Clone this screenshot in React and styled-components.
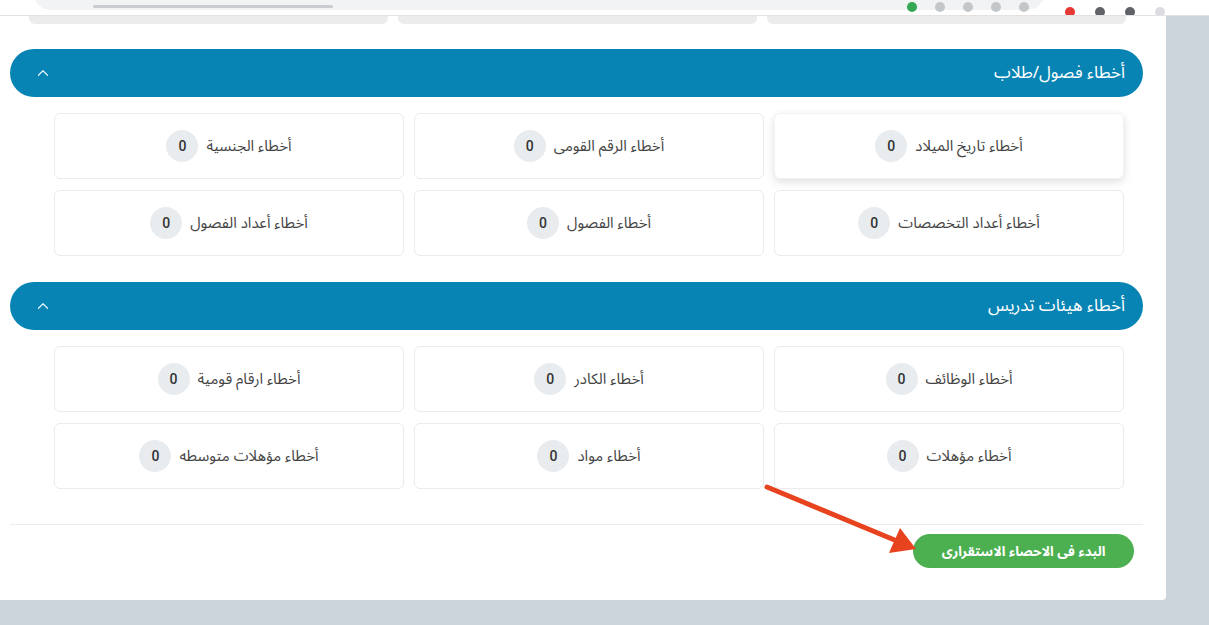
import React from "react";
import styled, { createGlobalStyle } from "styled-components";
import { ChevronUp } from "lucide-react";

const GlobalStyle = createGlobalStyle`
  html, body {
    margin: 0;
    padding: 0;
    background: #cdd5dc;
  }
  body {
    font-family: "Noto Sans Arabic", "DejaVu Sans", sans-serif;
  }
`;

const Page = styled.div`
  position: relative;
  width: 1209px;
  height: 625px;
  overflow: hidden;
  background: #cdd5dc;
`;

const BrowserBar = styled.div`
  height: 15px;
  background: #ffffff;
  border-bottom: 1px solid #e3e3e3;
  overflow: hidden;
  display: flex;
  align-items: flex-end;
  padding-left: 33px;
  gap: 20px;
`;

const Omnibox = styled.div`
  width: 1012px;
  height: 36px;
  margin-bottom: 5px;
  border-radius: 18px;
  background: #f1f3f4;
  display: flex;
  align-items: flex-end;
  padding: 0 16px 0 60px;
  box-sizing: border-box;
  gap: 18px;
`;

const UrlGhost = styled.span`
  width: 240px;
  height: 3px;
  margin-bottom: 2px;
  margin-right: auto;
  border-radius: 2px;
  background: #c9ccd0;
`;

const Dot = styled.span`
  width: 10px;
  height: 10px;
  border-radius: 50%;
  background: ${(p) => p.color};
  margin-bottom: -2px;
`;

const Main = styled.div`
  display: flex;
`;

const Panel = styled.div`
  width: 1166px;
  background: #ffffff;
  padding: 0 23px 32px 10px;
  box-sizing: border-box;
  border-bottom-right-radius: 4px;
`;

const TopStrip = styled.div`
  display: grid;
  grid-template-columns: repeat(3, 1fr);
  gap: 10px;
  margin: 0 17px 0 19px;
  height: 8px;
`;

const StripCard = styled.div`
  background: #ececec;
  border-radius: 0 0 6px 6px;
`;

const Section = styled.section`
  direction: rtl;
`;

const SectionHeader = styled.div`
  display: flex;
  align-items: center;
  justify-content: space-between;
  height: 48px;
  margin-top: ${(p) => p.top}px;
  padding: 0 18px 0 24px;
  border-radius: 24px;
  background: #0784b3;
  color: #ffffff;
  font-size: 17px;
`;

const Toggle = styled.span`
  display: flex;
  color: #e6f3f9;
`;

const CardGrid = styled.div`
  display: grid;
  grid-template-columns: repeat(3, 1fr);
  grid-auto-rows: 66px;
  gap: 11px 10px;
  margin: 16px 19px 0 44px;
`;

const Card = styled.div`
  display: flex;
  align-items: center;
  justify-content: center;
  gap: 8px;
  border: 1px solid ${(p) => (p.raised ? "#f2f2f2" : "#ebebeb")};
  border-radius: 6px;
  background: #ffffff;
  box-shadow: ${(p) => (p.raised ? "0 3px 8px rgba(0,0,0,0.13)" : "none")};
  color: #444;
  font-size: 15px;
`;

const Badge = styled.span`
  width: 32px;
  height: 32px;
  border-radius: 50%;
  background: #e9ecef;
  display: flex;
  align-items: center;
  justify-content: center;
  font-family: "Roboto", sans-serif;
  font-weight: 500;
  font-size: 14px;
  color: #333;
`;

const Divider = styled.hr`
  margin: 35px 0 0;
  border: 0;
  border-top: 1px solid #ededed;
`;

const Footer = styled.div`
  direction: rtl;
  display: flex;
  padding: 9px 9px 0;
`;

const StartButton = styled.button`
  width: 221px;
  height: 34px;
  border: 0;
  border-radius: 17px;
  background: #4caf50;
  color: #ffffff;
  font-family: "Noto Sans Arabic", "DejaVu Sans", sans-serif;
  font-weight: 700;
  font-size: 13.5px;
`;

const Arrow = styled.svg`
  position: absolute;
  left: 0;
  top: 0;
  pointer-events: none;
`;

const sections = [
  {
    title: "أخطاء فصول/طلاب",
    top: 25,
    items: [
      "أخطاء تاريخ الميلاد",
      "أخطاء الرقم القومى",
      "أخطاء الجنسية",
      "أخطاء أعداد التخصصات",
      "أخطاء الفصول",
      "أخطاء أعداد الفصول",
    ],
  },
  {
    title: "أخطاء هيئات تدريس",
    top: 26,
    items: [
      "أخطاء الوظائف",
      "أخطاء الكادر",
      "أخطاء ارقام قومية",
      "أخطاء مؤهلات",
      "أخطاء مواد",
      "أخطاء مؤهلات متوسطه",
    ],
  },
];

const App = () => (
  <Page>
    <GlobalStyle />
    <BrowserBar>
      <Omnibox>
        <UrlGhost />
        <Dot color="#34a853" />
        <Dot color="#c4c7ca" />
        <Dot color="#c4c7ca" />
        <Dot color="#c4c7ca" />
        <Dot color="#c4c7ca" />
      </Omnibox>
      <Dot color="#e53935" />
      <Dot color="#5f6368" />
      <Dot color="#5f6368" />
      <Dot color="#dadce0" />
    </BrowserBar>
    <Main>
      <Panel>
        <TopStrip>
          <StripCard />
          <StripCard />
          <StripCard />
        </TopStrip>
        {sections.map((s, si) => (
          <Section key={s.title}>
            <SectionHeader top={s.top}>
              <span>{s.title}</span>
              <Toggle>
                <ChevronUp size={18} strokeWidth={1.6} />
              </Toggle>
            </SectionHeader>
            <CardGrid>
              {s.items.map((label, i) => (
                <Card key={label} raised={si === 0 && i === 0}>
                  <span>{label}</span>
                  <Badge>0</Badge>
                </Card>
              ))}
            </CardGrid>
          </Section>
        ))}
        <Divider />
        <Footer>
          <StartButton>البدء فى الاحصاء الاستقرارى</StartButton>
        </Footer>
      </Panel>
    </Main>
    <Arrow width="1209" height="625" viewBox="0 0 1209 625">
      <line
        x1="767"
        y1="487"
        x2="897"
        y2="541"
        stroke="#e8431f"
        strokeWidth="5"
        strokeLinecap="round"
      />
      <polygon points="900,528 916,549 889,553" fill="#e8431f" />
    </Arrow>
  </Page>
);

export default App;
